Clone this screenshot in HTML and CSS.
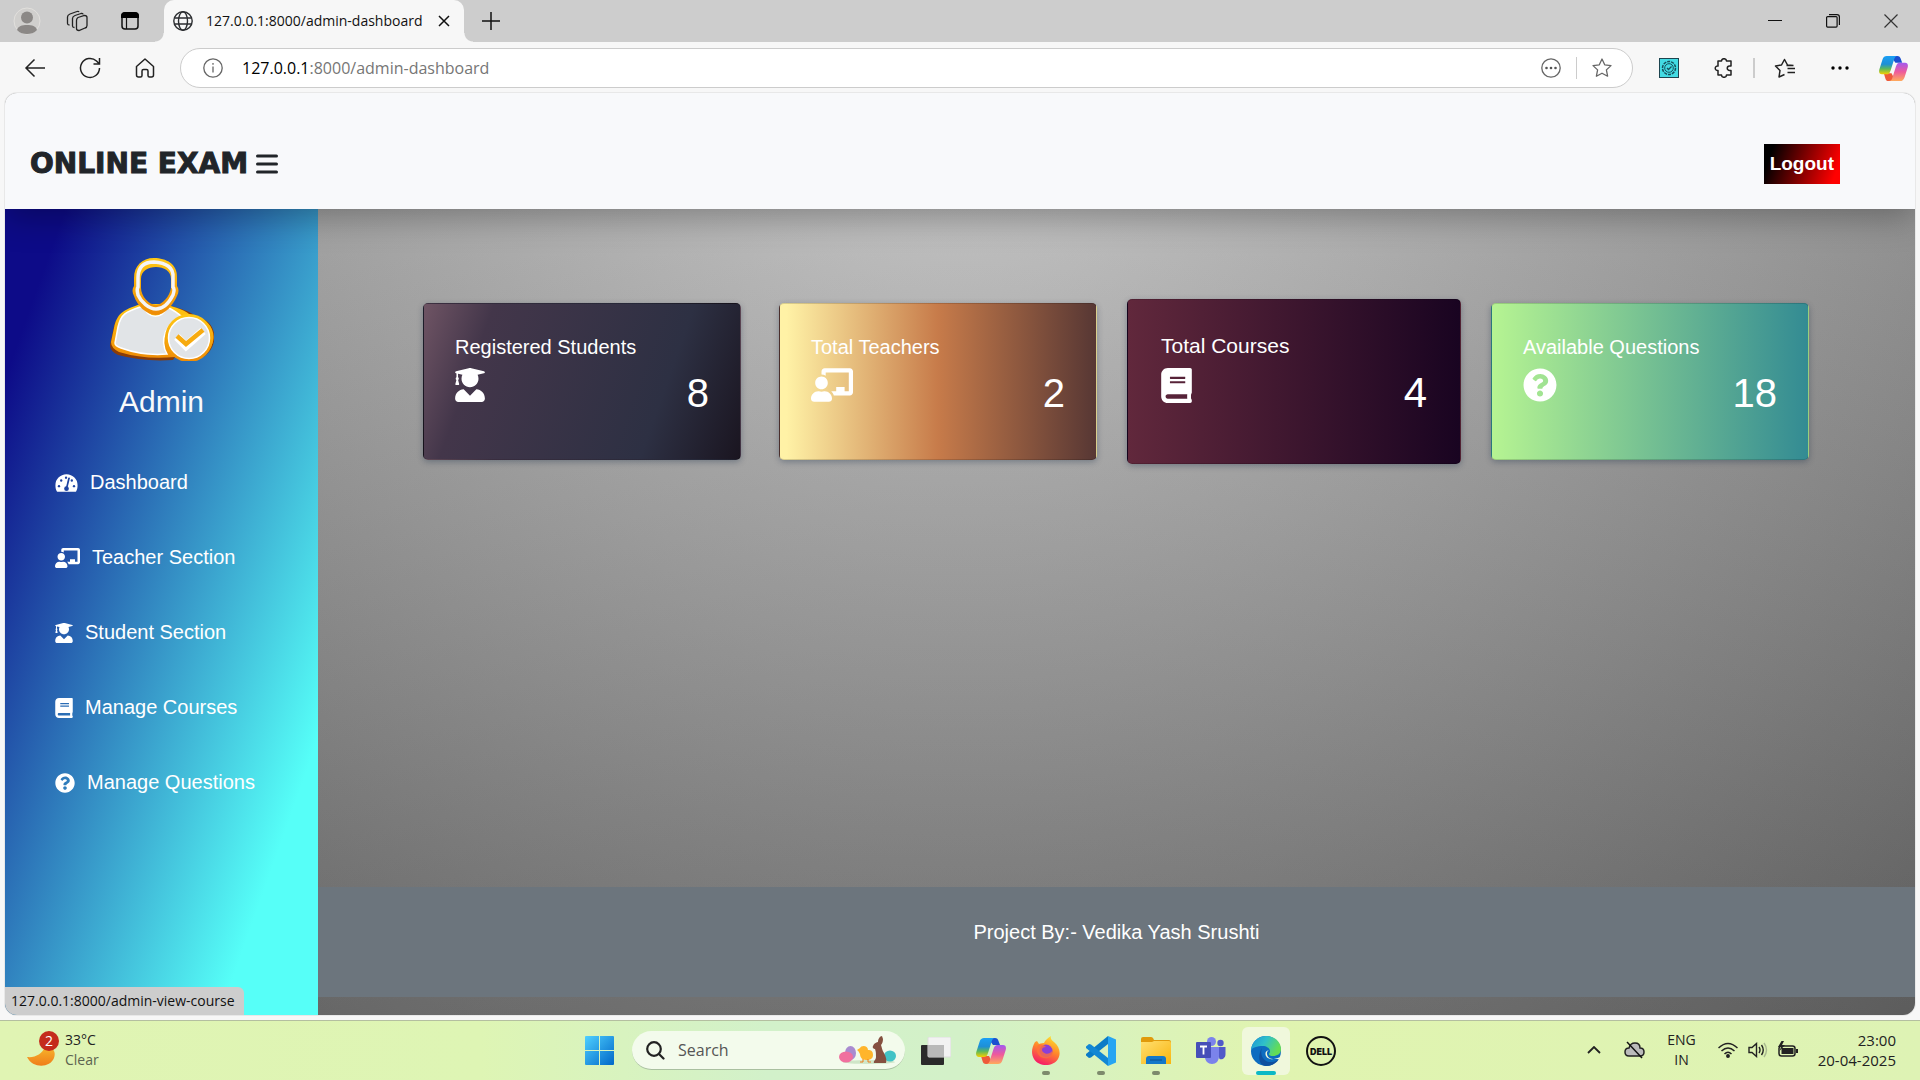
FILE: index.html
```html
<!DOCTYPE html>
<html lang="en">
<head>
<meta charset="utf-8">
<title>Online Exam - Admin Dashboard</title>
<link rel="stylesheet" href="styles.css">
</head>
<body>
<svg class="defs" aria-hidden="true">
  <defs>
    <linearGradient id="cp-a" x1="0" y1="0" x2="0" y2="1"><stop offset="0" stop-color="#1a9ff5"/><stop offset=".45" stop-color="#1e8fd6"/><stop offset=".7" stop-color="#5cb85c"/><stop offset="1" stop-color="#f5d000"/></linearGradient>
    <linearGradient id="cp-b" x1="0" y1="0" x2="0" y2="1"><stop offset="0" stop-color="#a259f0"/><stop offset=".5" stop-color="#ee5a9c"/><stop offset="1" stop-color="#ffab5c"/></linearGradient>
    <linearGradient id="win-g" x1="0" y1="0" x2="1" y2="1"><stop offset="0" stop-color="#4fd0ff"/><stop offset="1" stop-color="#0067c8"/></linearGradient>
    <linearGradient id="ff-g" x1=".7" y1="0" x2=".3" y2="1"><stop offset="0" stop-color="#ffe02e"/><stop offset=".45" stop-color="#ff8a2a"/><stop offset="1" stop-color="#f5156c"/></linearGradient>
    <linearGradient id="fold-g" x1="0" y1="0" x2="1" y2="1"><stop offset="0" stop-color="#ffdf70"/><stop offset="1" stop-color="#f9b50e"/></linearGradient>
    <linearGradient id="edge-g" x1="0" y1="0" x2="1" y2=".4"><stop offset="0" stop-color="#1a93d8"/><stop offset=".5" stop-color="#2fc0c9"/><stop offset="1" stop-color="#64dd54"/></linearGradient>
    <linearGradient id="moon-g" x1="0" y1="0" x2="0" y2="1"><stop offset="0" stop-color="#f7b52b"/><stop offset="1" stop-color="#ef7d1a"/></linearGradient>
    <linearGradient id="gold-g" x1="0" y1="0" x2="0" y2="1"><stop offset="0" stop-color="#ffc814"/><stop offset="1" stop-color="#ee8b06"/></linearGradient>
    <mask id="dash-m"><rect width="576" height="512" fill="#fff"/><g fill="#000"><circle cx="96" cy="336" r="30"/><circle cx="480" cy="336" r="30"/><circle cx="152" cy="192" r="30"/><circle cx="424" cy="192" r="30"/><circle cx="276" cy="120" r="30"/><circle cx="288" cy="400" r="60"/></g><path d="M288 400 352 136" stroke="#000" stroke-width="44" stroke-linecap="round"/></mask>
    <symbol id="i-dash" viewBox="0 0 576 512"><path mask="url(#dash-m)" d="M288 32C128.940 32 0 160.940 0 320c0 52.800 14.250 102.260 39.060 144.800 5.610 9.620 16.300 15.200 27.440 15.200h443c11.140 0 21.830-5.580 27.440-15.200C561.750 422.260 576 372.800 576 320c0-159.060-128.940-288-288-288z"/></symbol>
    <symbol id="i-teacher" viewBox="0 0 640 512"><path d="M208 352c-2.390 0-4.780.35-7.060 1.090C187.980 357.300 174.350 360 160 360c-14.350 0-27.980-2.700-40.950-6.910-2.280-.74-4.660-1.090-7.050-1.090C49.940 352-.33 402.480 0 464.620.14 490.880 21.730 512 48 512h224c26.270 0 47.860-21.120 48-47.380.33-62.140-49.940-112.620-112-112.620zm-48-32c53.020 0 96-42.980 96-96s-42.980-96-96-96-96 42.980-96 96 42.980 96 96 96zM592 0H208c-26.470 0-48 22.250-48 49.590V96c23.420 0 45.100 6.780 64 17.800V64h352v288h-64v-64H384v64h-76.240c19.100 16.690 33.120 38.730 39.690 64H592c26.470 0 48-22.250 48-49.590V49.590C640 22.250 618.470 0 592 0z"/></symbol>
    <symbol id="i-student" viewBox="0 0 448 512"><path d="M319.400 320.600L224 416l-95.400-95.400C57.100 323.700 0 382.200 0 454.400v9.600c0 26.500 21.500 48 48 48h352c26.500 0 48-21.500 48-48v-9.600c0-72.200-57.100-130.700-128.600-133.800zM13.600 79.800l6.400 1.500v58.400c-7 4.200-12 11.500-12 20.300 0 8.400 4.600 15.400 11.100 19.700L3.500 242c-1.700 6.900 2.100 14 7.600 14h41.800c5.500 0 9.300-7.100 7.600-14l-15.600-62.300C51.400 175.400 56 168.400 56 160c0-8.800-5-16.100-12-20.300V87.100l66 15.900c-8.600 17.200-14 36.400-14 57 0 70.700 57.300 128 128 128s128-57.300 128-128c0-20.600-5.300-39.800-14-57l96.300-23.200c18.200-4.400 18.200-27.100 0-31.500l-190.400-46c-13-3.100-26.700-3.100-39.700 0L13.600 48.200c-18.100 4.400-18.100 27.200 0 31.600z"/></symbol>
    <symbol id="i-book" viewBox="0 0 448 512"><path d="M448 360V24c0-13.300-10.700-24-24-24H96C43 0 0 43 0 96v320c0 53 43 96 96 96h328c13.300 0 24-10.700 24-24v-16c0-7.500-3.500-14.300-8.900-18.700-4.200-15.400-4.200-59.300 0-74.700 5.400-4.300 8.900-11.100 8.900-18.600zM128 134c0-3.300 2.700-6 6-6h212c3.300 0 6 2.700 6 6v20c0 3.300-2.700 6-6 6H134c-3.300 0-6-2.700-6-6v-20zm0 64c0-3.300 2.700-6 6-6h212c3.300 0 6 2.700 6 6v20c0 3.300-2.700 6-6 6H134c-3.300 0-6-2.700-6-6v-20zm253.400 250H96c-17.700 0-32-14.300-32-32 0-17.600 14.400-32 32-32h285.400c-1.900 17.100-1.900 46.900 0 64z"/></symbol>
    <symbol id="i-question" viewBox="0 0 512 512"><path d="M504 256c0 136.997-111.043 248-248 248S8 392.997 8 256C8 119.083 119.043 8 256 8s248 111.083 248 248zM262.655 90c-54.497 0-89.255 22.957-116.549 63.758-3.536 5.286-2.353 12.415 2.715 16.258l34.699 26.310c5.205 3.947 12.621 3.008 16.665-2.122 17.864-22.658 30.113-35.797 57.303-35.797 20.429 0 45.698 13.148 45.698 32.958 0 14.976-12.363 22.667-32.534 33.976C247.128 238.528 216 254.941 216 296v4c0 6.627 5.373 12 12 12h56c6.627 0 12-5.373 12-12v-1.333c0-28.462 83.186-29.647 83.186-106.667 0-58.002-60.165-102-116.531-102zM256 338c-25.365 0-46 20.635-46 46 0 25.364 20.635 46 46 46s46-20.636 46-46c0-25.365-20.635-46-46-46z"/></symbol>
    <symbol id="i-copilot" viewBox="0 0 30 28"><path d="M19 1c2 0 3 1 3.500 3L24 8h-7l-5-7z" fill="#1b4fd0"/><path d="M10 27c-2 0-3-1-3.500-3L5 19h8l4 8z" fill="#ee5a3a"/><path d="M8 1h11c-2 0-3 2-3.500 4L12 16c-1 3-2 4-4 4H3c-2.500 0-3.500-2-2.700-5L3.500 5C4.300 2 6 1 8 1z" fill="url(#cp-a)"/><path d="M22 27H10c2.500 0 3.500-2 4-4l3.500-11c1-3 2-4 4-4H27c2.500 0 3.500 2 2.700 5l-3.200 10c-1 3-2.500 4-4.500 4z" fill="url(#cp-b)"/></symbol>
  </defs>
</svg>
<div class="desktop">
  <div class="tabstrip">
    <button class="strip-btn" aria-label="Profile"><svg width="28" height="28" viewBox="0 0 28 28"><circle cx="14" cy="14" r="13" fill="#d0cfcd" stroke="#e2e0dd"/><circle cx="14" cy="10.500" r="6" fill="#8b8886"/><path d="M4 23c1-4 5-5 10-5s9 1 10 5c-3 3-6 4-10 4s-7-1-10-4z" fill="#8b8886"/></svg></button>
    <button class="strip-btn narrow" aria-label="Workspaces"><svg width="22" height="22" viewBox="0 0 22 22" fill="none" stroke="#222" stroke-width="1.300"><path d="M12 7.500 18.500 5.500q2.500 0 2.500 2v8q0 2-2 2.500l-6 2.500q-2.500 0-2.500-2v-8q0-2 1.500-3z"/><path d="M17 4.500q0-1.500-2-1L9 5.500Q6.500 6.500 6.500 8.500V16q0 1.500 2 1.500"/><path d="M13 2q-.5-1-2-.5L4 4Q1.500 5 1.500 7v6.500q0 1.500 2 1.500"/></svg></button>
    <button class="strip-btn wide" aria-label="Tab actions"><svg width="20" height="20" viewBox="0 0 20 20"><rect x="2" y="2" width="16" height="16" rx="3" fill="none" stroke="#111" stroke-width="1.500"/><path d="M1 5q0-4 4-4h10q4 0 4 4v2H1z"/><path d="M6.500 7v11" stroke="#111" stroke-width="1.200"/></svg></button>
    <div class="tab">
      <svg width="20" height="20" viewBox="0 0 20 20" fill="none" stroke="#2b2d30" stroke-width="1.400"><circle cx="10" cy="10" r="9.200"/><ellipse cx="10" cy="10" rx="4.500" ry="9.200"/><path d="M1.500 7h17M1.500 13h17"/></svg>
      <span class="tab-title">127.0.0.1:8000/admin-dashboard</span>
      <button class="tab-close" aria-label="Close tab"><svg width="12" height="12" viewBox="0 0 12 12" stroke="#111" stroke-width="1.500"><path d="m1 1 10 10M11 1 1 11"/></svg></button>
    </div>
    <button class="strip-btn" aria-label="New tab"><svg width="18" height="18" viewBox="0 0 18 18" stroke="#111" stroke-width="1.500"><path d="M9 0v18M0 9h18"/></svg></button>
    <div class="window-btns">
      <button class="strip-btn" aria-label="Minimize"><svg width="14" height="14" viewBox="0 0 14 14" stroke="#111"><path d="M0 6.500h14"/></svg></button>
      <button class="strip-btn" aria-label="Restore"><svg width="14" height="14" viewBox="0 0 14 14" fill="none" stroke="#111" stroke-width="1.200"><rect x=".6" y="2.600" width="10.500" height="10.500" rx="1"/><path d="M3 .6h8q2.400 0 2.400 2.400v8"/></svg></button>
      <button class="strip-btn" aria-label="Close"><svg width="14" height="14" viewBox="0 0 14 14" stroke="#333" stroke-width="1.200"><path d="m.5.5 13 13M13.500.5l-13 13"/></svg></button>
    </div>
  </div>

  <div class="toolbar">
    <button class="tool" aria-label="Back"><svg width="22" height="20" viewBox="0 0 22 20" fill="none" stroke="#222" stroke-width="1.500"><path d="M21 10H2M10.500 1.500 2 10l8.500 8.500"/></svg></button>
    <button class="tool" aria-label="Refresh"><svg width="22" height="22" viewBox="0 0 22 22" fill="none" stroke="#222" stroke-width="1.500"><path d="M20.500 11a9.500 9.500 0 1 1-3-7l3 3M20.500 1v6h-6"/></svg></button>
    <button class="tool" aria-label="Home"><svg width="20" height="20" viewBox="0 0 20 20" fill="none" stroke="#222" stroke-width="1.500"><path d="M1.500 8.500 10 1l8.500 7.500V17q0 2-2 2h-2q-1.500 0-1.500-1.500V13q0-1.500-1.500-1.500h-3Q7 11.500 7 13v4.500Q7 19 5.500 19h-2q-2 0-2-2z" stroke-linejoin="round"/></svg></button>
    <div class="address">
      <svg width="20" height="20" viewBox="0 0 20 20" fill="none" stroke="#666" stroke-width="1.300"><circle cx="10" cy="10" r="9.200"/><path d="M10 8.500v6M10 5v1.800"/></svg>
      <a class="url" href="#"><b>127.0.0.1</b>:8000/admin-dashboard</a>
      <svg width="20" height="20" viewBox="0 0 20 20" fill="none" stroke="#666" stroke-width="1.300"><circle cx="10" cy="10" r="9.200"/><g fill="#555" stroke="none"><circle cx="5.500" cy="10" r="1.300"/><circle cx="10" cy="10" r="1.300"/><circle cx="14.500" cy="10" r="1.300"/></g></svg>
      <span class="divider"></span>
      <svg width="20" height="20" viewBox="0 0 20 20" fill="none" stroke="#666" stroke-width="1.300" stroke-linejoin="round"><path d="m10 1 2.700 5.800 6.300.8-4.600 4.300 1.200 6.300L10 15.200l-5.600 3 1.200-6.300L1 7.600l6.300-.8z"/></svg>
    </div>
    <button class="tool" aria-label="Extension"><svg width="20" height="20" viewBox="0 0 20 20"><rect x=".5" y=".5" width="19" height="19" fill="#43dbe3" stroke="#1d4550"/><g fill="none" stroke="#16505c"><circle cx="10" cy="10" r="6.500" stroke-width="1.500" stroke-dasharray="3 1"/><circle cx="10" cy="10" r="4.300"/><path d="m8 10 1.500 1.500L12.500 8.500" stroke-width="1.300"/></g></svg></button>
    <button class="tool" aria-label="Extensions"><svg width="20" height="20" viewBox="0 0 20 20" fill="none" stroke="#222" stroke-width="1.500" stroke-linejoin="round"><path d="M4 3h3.500a2.500 2.300 0 1 1 5 0H17v5h-1.500a2.200 2.200 0 1 0 0 4.500H17V17h-4.500a2.500 2.300 0 1 1-5 0H4v-4.500a2.300 2.300 0 1 1 0-4.500z"/></svg></button>
    <span class="divider thick"></span>
    <button class="tool" aria-label="Favorites"><svg width="22" height="20" viewBox="0 0 22 20" fill="none" stroke="#222" stroke-width="1.500" stroke-linejoin="round"><path d="M10.500 16.500 5 19l1-6.500L1.500 8l6-1L10.500 1.500 13.500 7l6 .5M13.500 10.500H21M13.500 14.500H21M12.500 7.500h7"/></svg></button>
    <button class="tool" aria-label="Settings and more"><svg width="18" height="4" viewBox="0 0 18 4"><circle cx="2" cy="2" r="1.700"/><circle cx="9" cy="2" r="1.700"/><circle cx="16" cy="2" r="1.700"/></svg></button>
    <button class="tool last" aria-label="Copilot"><svg width="29" height="27"><use href="#i-copilot"/></svg></button>
  </div>

  <div class="page">
    <header class="site-header">
      <span class="brand">ONLINE EXAM</span>
      <button class="menu" aria-label="Toggle menu"><svg width="22" height="20" viewBox="0 0 22 20" stroke="#212529" stroke-width="3" stroke-linecap="round"><path d="M1.500 2h19M1.500 10h19M1.500 18h19"/></svg></button>
      <a class="logout" href="#">Logout</a>
    </header>
    <div class="content">
      <nav class="sidebar">
        <svg class="avatar" width="104" height="104" viewBox="0 0 104 104">
          <path d="M30 48C12 54 6 58 3 74L0 88q0 6 8 10 26 7 55 5l2-3 21 3c24-6 25-40 0-43-3-5-18-9-28-12z" fill="#8a3c08"/>
          <path d="M31 47C12 53 7 57 4 71L1 85q0 6 8 10 26 8 56 5 5 3 14 2c32-3 33-40 2-43-3-5-16-9-27-12z" fill="url(#gold-g)"/>
          <path fill-rule="evenodd" d="M33 49C15 55 11 57 8 70L5 86q0 3 6 5 22 8 46 6c-8-14-1-32 15-37-4-4-9-7-15-10-5 12-18 13-24-1z" fill="#e1e4e7" stroke="#fff" stroke-width="1.500"/>
          <path fill-rule="evenodd" d="M44 1C32 1 24 9 24 21v8c-2 3-2 6 0 10 3 9 12 19 22 19 9 0 17-10 21-19 2-4 2-7 0-10v-8C68 7 56 1 44 1zm2 9c8 0 15 4 15 12v9c-1 8-9 17-15 17-7 0-15-9-15-17v-9c0-8 7-12 15-12z" fill="url(#gold-g)"/>
          <path d="M44 5C33 5 28 11 28 21v9c-2 3 0 6 0 8 3 7 11 14 18 14 8 0 14-8 17-14 1-3 2-6 0-8v-9C64 10 56 6 44 5z" fill="none" stroke="#f5f5f7" stroke-width="3.500"/>
          <circle cx="79" cy="81" r="24" fill="url(#gold-g)"/>
          <circle cx="79" cy="81" r="20.500" fill="#e1e4e7" stroke="#fff" stroke-width="1.500"/>
          <path d="m67 80 9 9 17-15" fill="none" stroke="#fff" stroke-width="8"/>
          <path d="m67 79 9 8 17-14" fill="none" stroke="#f7ab10" stroke-width="4.500"/>
        </svg>
        <h2 class="role">Admin</h2>
        <ul class="menu-list">
          <li><a href="#"><svg width="23" height="20"><use href="#i-dash"/></svg>Dashboard</a></li>
          <li><a href="#"><svg width="25" height="20"><use href="#i-teacher"/></svg>Teacher Section</a></li>
          <li><a href="#"><svg width="18" height="20"><use href="#i-student"/></svg>Student Section</a></li>
          <li><a href="#"><svg width="18" height="20"><use href="#i-book"/></svg>Manage Courses</a></li>
          <li><a href="#"><svg width="20" height="20"><use href="#i-question"/></svg>Manage Questions</a></li>
        </ul>
      </nav>
      <main class="main">
        <section class="cards">
          <article class="card students"><h3>Registered Students</h3><div class="stat"><svg width="30" height="34"><use href="#i-student"/></svg><span>8</span></div></article>
          <article class="card teachers"><h3>Total Teachers</h3><div class="stat"><svg width="42" height="34"><use href="#i-teacher"/></svg><span>2</span></div></article>
          <article class="card courses active"><h3>Total Courses</h3><div class="stat"><svg width="31" height="35"><use href="#i-book"/></svg><span>4</span></div></article>
          <article class="card questions"><h3>Available Questions</h3><div class="stat"><svg width="34" height="34"><use href="#i-question"/></svg><span>18</span></div></article>
        </section>
        <footer class="site-footer">Project By:- Vedika Yash Srushti</footer>
      </main>
    </div>
    <div class="status">127.0.0.1:8000/admin-view-course</div>
  </div>

  <div class="taskbar">
    <div class="weather">
      <svg width="34" height="38" viewBox="0 0 34 38"><path d="M0 27c8 1 15-3 18-10 9 0 11 5 9 11C23 38 6 39 0 27z" fill="url(#moon-g)"/><circle cx="22" cy="11" r="10" fill="#c42b1c"/><text class="badge" x="22" y="16" text-anchor="middle">2</text></svg>
      <div><div>33°C</div><div class="dim">Clear</div></div>
    </div>
    <div class="apps">
      <button class="app" aria-label="Start"><svg width="29" height="29" viewBox="0 0 29 29" fill="url(#win-g)"><path d="M1 0h13v14H0V1q0-1 1-1zM15 0h13q1 0 1 1v13H15zM0 15h14v14H1q-1 0-1-1zM15 15h14v13q0 1-1 1H15z"/></svg></button>
      <label class="search">
        <svg width="19" height="19" viewBox="0 0 19 19" fill="none" stroke="#222" stroke-width="2.200" stroke-linecap="round"><circle cx="8" cy="8" r="6.800"/><path d="m13 13 4.500 4.500"/></svg>
        <input type="text" placeholder="Search" aria-label="Search">
        <svg width="58" height="28" viewBox="0 0 58 28"><ellipse cx="30" cy="26" rx="26" ry="2" fill="#cfe6c8"/><ellipse cx="11.500" cy="17" rx="5.500" ry="7" fill="#a98bd0"/><ellipse cx="7" cy="21" rx="7" ry="5.500" fill="#f0709f"/><path d="M18 14l3-2c1-3 8-3 8 2 3 0 5 1 5 5s-3 5-7 5-6-3-6-6c-1-1-1-3-3-4z" fill="#ffb52b"/><path d="M24 23v3h-3M29 23v3h3" stroke="#ef7d1a" fill="none"/><ellipse cx="51" cy="20" rx="6" ry="5.500" fill="#42c3c6"/><path d="M34 10c1-3 4-4 5-4 0-3 2-6 4-6l1 3c0 3-1 5-2 6 1 3 1 5 3 8 2 4 3 7 2 10H35c-1-2 2-3 2-6 0-4 0-5-1-8-1 0-3-1-2-3z" fill="#855040"/></svg>
      </label>
      <button class="app" aria-label="Task view"><svg width="30" height="28" viewBox="0 0 30 28"><rect y="8" width="23" height="20" rx="1" fill="#2a2a2a"/><rect x="7" width="23" height="20" rx="1" fill="#f2f2f2" stroke="#ddd"/><path d="M7 8h16v12H8q-1 0-1-1z" fill="#b9b9b9"/></svg></button>
      <button class="app" aria-label="Copilot"><svg width="30" height="28"><use href="#i-copilot"/></svg></button>
      <button class="app running" aria-label="Firefox"><svg width="28" height="29" viewBox="0 0 28 29"><path d="M3 6l2-1 2 3c2-1 4-1 5-1 1-3 4-5 7-7-1 3 1 4 3 6 6 5 7 12 4 17-5 8-19 8-24 0C-1 18-.5 12 3 6z" fill="url(#ff-g)"/><circle cx="14" cy="15" r="6.500" fill="#8a3fd8"/><path d="M6 9c4-2 6 0 8 2-4 0-5 3-3 5 3 3 7 2 9-1 1 6-4 8-8 7-6-1-9-7-6-13z" fill="#ff7139" opacity=".8"/></svg></button>
      <button class="app running" aria-label="Visual Studio Code"><svg width="30" height="30" viewBox="0 0 30 30"><path d="M22 0v8L5 21.500 3 22l-3-2.500v-1.500z" fill="#0a7bc7"/><path d="M22 30v-8L5 8.500 3 8l-3 2.500V12z" fill="#1287d4"/><path d="m22 0 8 3.500v23L22 30z" fill="#27a5f2"/></svg></button>
      <button class="app running" aria-label="File Explorer"><svg width="30" height="27" viewBox="0 0 30 27"><path d="M0 2q0-2 2-2h8q1 0 2 1l1 2h15q2 0 2 2v6H0z" fill="#e09a0b"/><path d="M0 5h11l2-1h15q2 0 2 2v21H0z" fill="url(#fold-g)"/><path d="M5 27v-5q0-3 3-3h14q3 0 3 3v5z" fill="#1478c9"/><path d="M9 23h12" stroke="#0a4e91"/></svg></button>
      <button class="app" aria-label="Teams"><svg width="30" height="27" viewBox="0 0 30 27"><circle cx="24.500" cy="6" r="3.200" fill="#5059c9"/><circle cx="15.500" cy="4.500" r="4.500" fill="#7b83eb"/><path d="M20 10h9.500v7c0 4-3 6-6 5z" fill="#5059c9"/><path d="M9 10h14v9c0 5-3 8-7 8s-7-3-7-7z" fill="#7b83eb"/><rect y="5" width="15" height="16" rx="1" fill="#464eb8"/><path d="M4 9.500h7M7.500 9.500v8" stroke="#fff" stroke-width="1.800"/></svg></button>
      <button class="app current" aria-label="Microsoft Edge"><svg width="30" height="30" viewBox="0 0 30 30"><circle cx="15" cy="15" r="15" fill="#0d6cc0"/><path d="M0 14C1 5 8 0 15 0c9 0 15 6 15 13 0 5-4 7-8 7-3 0-4-1-4-2 0-1 1-1 1-3 0-3-4-5-7-5C6 10 1 12 0 14z" fill="url(#edge-g)"/><path d="M11 12c-3 8 3 15 10 14 3 0 5-2 7-3-3 5-8 7-13 7C8 30 6 20 11 12z" fill="#0f4f9f"/><path d="M18 14c-4 1-4 4-3 6 2 4 8 4 14 1l-1 3c3-1-3-1-6-1-6 0-8-7-4-9z" fill="#f0f7dc"/></svg></button>
      <button class="app" aria-label="Dell"><svg width="30" height="30" viewBox="0 0 30 30"><circle cx="15" cy="15" r="14" fill="none" stroke="#111" stroke-width="2"/><text class="dell" x="15" y="19" text-anchor="middle">DELL</text></svg></button>
    </div>
    <div class="tray">
      <svg width="14" height="8" viewBox="0 0 14 8" fill="none" stroke="#222" stroke-width="1.800"><path d="m1 7 6-6 6 6"/></svg>
      <svg width="21" height="18" viewBox="0 0 21 18"><path d="M5 15q-4 0-4-4t4-4c1-4 3-5 6-5s5 2 5 5q4 0 4 4t-4 4z" fill="#bbb" stroke="#222" stroke-width="1.500"/><path d="m3 1 15 16" stroke="#111" stroke-width="1.500"/></svg>
      <div class="lang"><div>ENG</div><div>IN</div></div>
      <svg class="wifi" width="20" height="16" viewBox="0 0 20 16" fill="none" stroke="#222" stroke-width="1.500"><path d="M.5 6q9.500-9 19 0M3.500 9q6.500-6 13 0M6.500 12q3.500-3.500 7 0"/><circle cx="10" cy="14" r="1.200" fill="#222"/></svg>
      <svg width="20" height="16" viewBox="0 0 20 16" fill="none" stroke="#222" stroke-width="1.400"><path d="M1 5.500h3l4.500-4v13l-4.500-4H1zM11 5q2 3 0 6M13.500 3q3.500 5 0 10"/><path d="M16 1q5 7 0 14" stroke="#aaba90"/></svg>
      <svg width="20" height="17" viewBox="0 0 20 17"><rect x="1" y="5" width="16" height="10" rx="2.500" fill="none" stroke="#222" stroke-width="1.500"/><rect x="3.500" y="7" width="12" height="6" fill="#222"/><path d="M18 8h2v4h-2zM3.500 0 0 6h3L1.500 10 7 4H4l2-4z" fill="#222"/></svg>
      <div class="clock"><div>23:00</div><div>20-04-2025</div></div>
    </div>
  </div>
</div>
</body>
</html>
```
FILE: styles.css
```css
* { box-sizing: border-box; }
body { margin: 0; font-family: "Liberation Sans", Arial, sans-serif; font-size: 20px; color: #fff; }
button { border: 0; padding: 0; background: none; display: flex; align-items: center; justify-content: center; }
a { color: inherit; text-decoration: none; }
h2, h3, ul { margin: 0; padding: 0; font-weight: 400; list-style: none; }
svg { flex: none; }
.defs { position: absolute; width: 0; height: 0; }

.desktop { min-height: 100vh; display: flex; flex-direction: column; background: #f7f7f7; }

/* Browser tab strip */
.tabstrip { display: flex; height: 42px; background: #cdcdcd; }
.strip-btn { width: 54px; height: 42px; }
.strip-btn.narrow { width: 46px; }
.strip-btn.wide { width: 60px; }
.tab { position: relative; display: flex; align-items: center; gap: 13px; width: 300px; margin-left: 4px; padding: 0 14px 0 9px; background: #f7f7f7; border-radius: 10px 10px 0 0; color: #111; }
.tab::before, .tab::after { content: ""; position: absolute; bottom: 0; width: 9px; height: 9px; }
.tab::before { right: 100%; background: radial-gradient(circle at 0 0, #cdcdcd 8px, #f7f7f7 9px); }
.tab::after { left: 100%; background: radial-gradient(circle at 100% 0, #cdcdcd 8px, #f7f7f7 9px); }
.tab-title { flex: 1; font: 14px/20px "Open Sans", "Noto Sans", sans-serif; white-space: nowrap; }
.window-btns { display: flex; margin-left: auto; }
.window-btns .strip-btn { width: 58px; }

/* Browser toolbar */
.toolbar { display: flex; align-items: center; height: 51px; padding: 1px 0 0 7px; }
.tool { width: 55px; height: 40px; }
.tool.last { width: 53px; }
.address { flex: 1; display: flex; align-items: center; height: 40px; margin: 0 8px; padding: 0 20px 0 22px; background: #fff; border: 1px solid #ccc; border-radius: 20px; }
.url { flex: 1; padding-left: 19px; font: 16px/24px "Open Sans", "Noto Sans", sans-serif; color: #767676; }
.url b { font-weight: 400; color: #000; }
.divider { width: 1px; height: 22px; margin: 0 15px; background: #ccc; }
.divider.thick { width: 2px; height: 20px; margin: 0 2px; }

/* Web page */
.page { position: relative; flex: 1; display: flex; flex-direction: column; margin: 0 5px 5px; overflow: hidden; box-shadow: 0 0 0 1px #e8e8e8; border-radius: 12px; color: #fff;
  background: linear-gradient(to bottom, rgba(255,255,255,.15) 0%, rgba(0,0,0,.15) 100%), radial-gradient(at top center, rgba(255,255,255,.4) 0%, rgba(0,0,0,.4) 120%) #989898; }
.site-header { position: relative; display: flex; align-items: center; height: 116px; padding: 26px 75px 0 25px; background: #f8f9fb; box-shadow: 0 8px 32px rgba(0,0,0,.3); color: #212529; }
.brand { font: 700 28px/40px "DejaVu Sans", Verdana, sans-serif; -webkit-text-stroke: 1px #212529; }
.menu { margin-left: 8px; }
.logout { margin-left: auto; padding: 0 6px; font-size: 19px; line-height: 40px; font-weight: 700; color: #fff; background: linear-gradient(109.6deg, #000 11%, #f00 91%); }
.content { flex: 1; display: flex; }
.sidebar { width: 313px; padding-top: 48px; background: linear-gradient(109.6deg, rgb(13,11,136) 9.4%, rgb(86,255,248) 78.4%) 0 0 / 100% 114%; }
.avatar { display: block; margin: 0 auto; }
.role { margin: 21px 0 23px; text-align: center; font-size: 30px; line-height: 40px; color: #f8f9fa; }
.menu-list a { display: flex; align-items: center; gap: 12px; height: 75px; padding-left: 50px; }
.menu-list svg, .stat svg { fill: #fff; }
.main { flex: 1; display: flex; flex-direction: column; }
.cards { display: grid; grid-template-columns: repeat(4, 1fr); gap: 38px; padding: 94px 106px 40px 105px; }
.card { height: 157px; padding: 31px; border: 1px solid rgba(0,0,0,.15); border-radius: 5px; box-shadow: 0 2px 6px rgba(4,26,55,.3); }
.card h3 { font-size: 20px; line-height: 24px; }
.stat { display: flex; justify-content: space-between; align-items: flex-start; padding-top: 9px; }
.stat span { font-size: 40px; line-height: 50px; }
.students { background: linear-gradient(109.6deg, #6f5464 0%, #43364a 19%, #2d3043 73%, #1a1520 100%); }
.teachers { background: linear-gradient(90deg, #fff2a6 2%, #c77b4a 50%, #573734 100%); }
.courses { background: linear-gradient(90deg, #61283c, #190421); }
.questions { background: linear-gradient(90deg, #b6f492, #338b93); }
.card.active { height: 165px; margin: -4px -8px; padding: 34px 33px; }
.card.active h3 { font-size: 21px; }
.card.active .stat { padding-top: 10px; }
.card.active .stat span { font-size: 42px; }
.site-footer { margin: auto 0 18px; padding: 30px 0 50px; text-align: center; line-height: 30px; background: #6c757d; }
.status { position: absolute; left: 0; bottom: 0; height: 28px; padding: 0 9px 0 6px; border-radius: 0 6px 0 0; background: #cdcdcd; color: #111; font: 14px/28px "Open Sans", "Noto Sans", sans-serif; }

/* Taskbar */
.taskbar { display: grid; grid-template-columns: 1fr auto 1fr; align-items: center; height: 60px; border-top: 1px solid #b4bfa0; color: #222; font: 14px/20px "Open Sans", "Noto Sans", sans-serif;
  background: linear-gradient(90deg, #e0f4b3, #def5b4 25%, #d2f1ca 40%, #d3f1c8 50%, #e0f4b0 66%, #def3b4 100%); }
.weather { display: flex; gap: 4px; padding: 0 0 2px 27px; }
.dim { color: #5c6350; }
.badge { font: 14px "Open Sans", sans-serif; fill: #fff; }
.apps { display: flex; align-items: center; gap: 7px; }
.app { position: relative; width: 48px; height: 48px; border-radius: 6px; }
.app.running::after, .app.current::after { content: ""; position: absolute; bottom: 0; width: 8px; height: 4px; border-radius: 2px; background: #7d8a6c; }
.app.current { background: #f0f8dc; }
.app.current::after { width: 20px; background: #0bb9c5; }
.dell { font: 900 9px Inter, sans-serif; fill: #111; }
.search { display: flex; align-items: center; gap: 13px; width: 273px; height: 39px; margin-left: 2px; padding: 0 8px 0 14px; border-radius: 20px; border-bottom: 1px solid #a9c0a0; background: #f3fbec; }
.search input { flex: 1; min-width: 0; padding: 0; border: 0; outline: 0; background: none; font: 16px/24px "Open Sans", "Noto Sans", sans-serif; }
.search input::placeholder { color: #555; }
.tray { display: flex; align-items: center; justify-content: flex-end; padding: 0 24px 2px 0; }
.tray > * + * { margin-left: 10px; }
.tray > svg:nth-child(2) { margin-left: 23px; }
.tray .lang { margin-left: 22px; text-align: center; }
.tray .wifi { margin-left: 22px; }
.tray .clock { margin-left: 20px; text-align: right; font-size: 15px; }
```
